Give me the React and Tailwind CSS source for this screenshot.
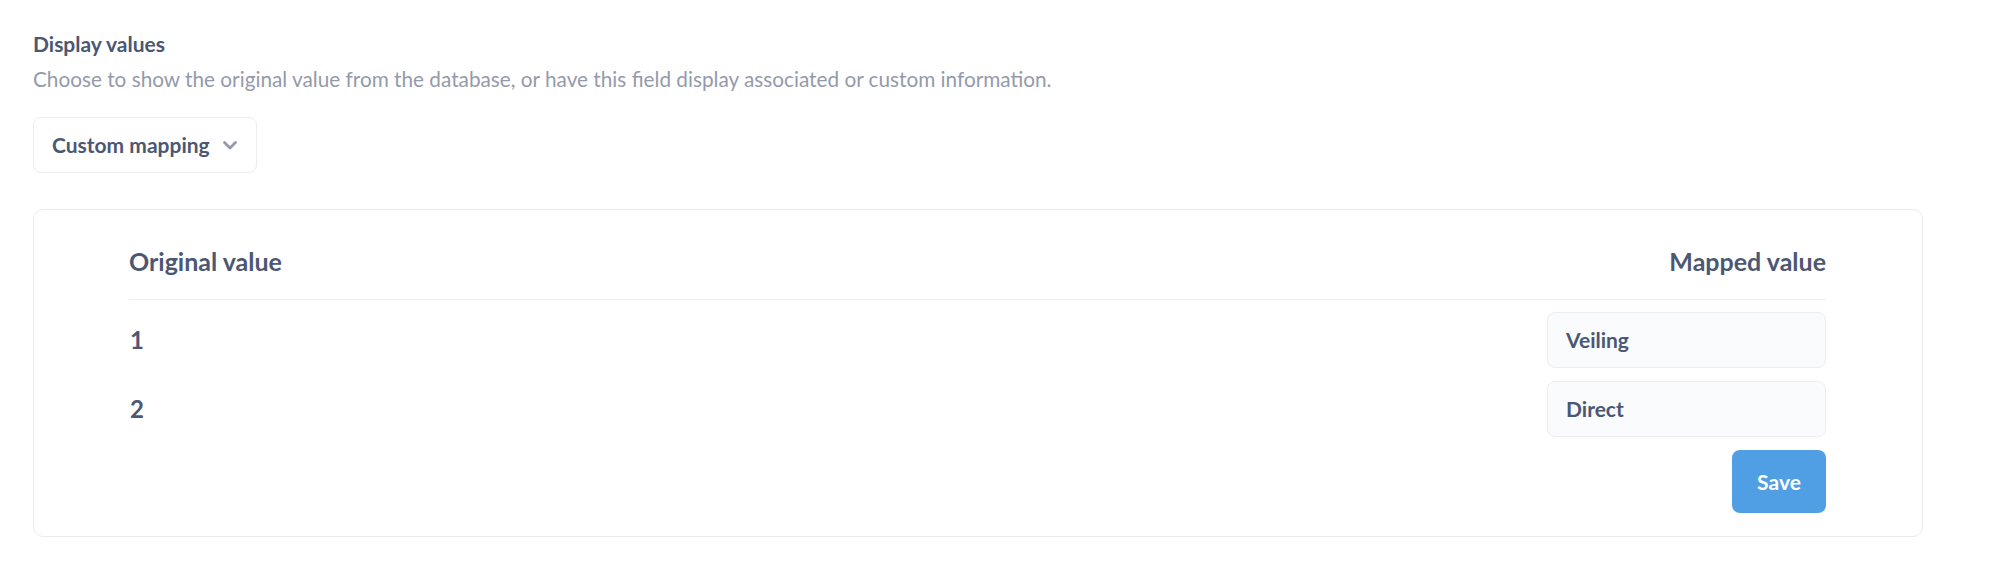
export default function App() {
  return (
    <div className="w-[1990px] h-[574px] bg-white font-['Lato',sans-serif] text-[#4c5773] pl-[33px] pr-[67px] pt-[31px]">
      <div className="text-[21px] leading-[25px] font-bold">Display values</div>
      <div className="text-[20.75px] leading-[24px] text-[#949aab] mt-[11px]">
        Choose to show the original value from the database, or have this field display associated or custom information.
      </div>
      <button className="mt-[26px] h-[56px] w-[224px] border border-[#eeecec] rounded-[8px] bg-white flex items-center pl-[18px] pr-[16px] gap-[12px]">
        <span className="text-[21px] font-bold text-[#4c5773]">Custom mapping</span>
        <svg width="16" height="16" viewBox="0 0 16 16" fill="none">
          <path d="M2.5 5.5L8 11l5.5-5.5" stroke="#949aab" strokeWidth="2.8" strokeLinecap="round" strokeLinejoin="round" />
        </svg>
      </button>
      <div className="mt-[36px] h-[328px] border border-[#eaeaf0] rounded-[10px] pl-[95px] pr-[96px] pt-[36px]">
        <div className="flex justify-between items-start h-[54px] border-b border-[#eeecf0] text-[25px] leading-[30px] font-bold">
          <span>Original value</span>
          <span>Mapped value</span>
        </div>
        <div className="flex flex-col gap-[13px] mt-[12px]">
          {["Veiling", "Direct"].map((v, i) => (
            <div key={v} className="flex justify-between items-center">
              <span className="text-[24px] font-bold pl-[1px]">{i + 1}</span>
              <div className="w-[279px] h-[56px] border border-[#eeecf0] rounded-[8px] bg-[#f9fbfc] flex items-center pl-[18px] text-[21px] font-bold">
                {v}
              </div>
            </div>
          ))}
        </div>
        <div className="flex justify-end mt-[13px]">
          <button className="w-[94px] h-[63px] rounded-[8px] bg-[#509ee3] text-white text-[21px] font-bold">Save</button>
        </div>
      </div>
    </div>
  );
}
